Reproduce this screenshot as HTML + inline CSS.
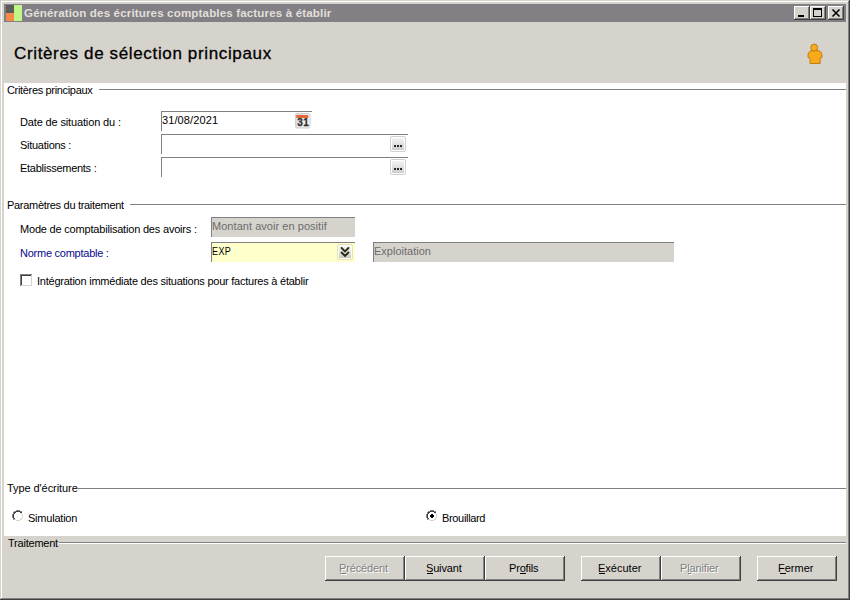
<!DOCTYPE html>
<html><head><meta charset="utf-8"><style>
html,body{margin:0;padding:0;width:850px;height:600px;overflow:hidden;background:#d6d3cd}
body{position:relative;font-family:"Liberation Sans",sans-serif}
.b{position:absolute}
.tx{position:absolute;white-space:nowrap;font-family:"Liberation Sans",sans-serif}
u{text-decoration:underline;text-underline-offset:1px}
</style></head><body>
<div class="b" style="left:0px;top:0px;width:850px;height:600px;background:#d6d3cd"></div>
<div class="b" style="left:1px;top:1px;width:848px;height:1px;background:#fff"></div>
<div class="b" style="left:1px;top:1px;width:1px;height:597px;background:#fff"></div>
<div class="b" style="left:848px;top:1px;width:1px;height:598px;background:#808080"></div>
<div class="b" style="left:1px;top:598px;width:848px;height:1px;background:#808080"></div>
<div class="b" style="left:849px;top:0px;width:1px;height:600px;background:#404040"></div>
<div class="b" style="left:0px;top:599px;width:850px;height:1px;background:#404040"></div>
<div class="b" style="left:4px;top:4px;width:842px;height:18px;background:#828085"></div>
<div class="b" style="left:6px;top:13px;width:8px;height:8px;background:#f6884a"></div>
<div class="b" style="left:6px;top:5px;width:8px;height:8px;background:#5c5c5a"></div>
<div class="b" style="left:14px;top:5px;width:8px;height:16px;background:#c0f688"></div>
<div class="b" style="left:794px;top:6px;width:16px;height:14px;background:#d6d3cd;box-shadow:inset -1px -1px #404040, inset 1px 1px #fff, inset -2px -2px #808080"></div>
<div class="b" style="left:810px;top:6px;width:16px;height:14px;background:#d6d3cd;box-shadow:inset -1px -1px #404040, inset 1px 1px #fff, inset -2px -2px #808080"></div>
<div class="b" style="left:828px;top:6px;width:16px;height:14px;background:#d6d3cd;box-shadow:inset -1px -1px #404040, inset 1px 1px #fff, inset -2px -2px #808080"></div>
<div class="b" style="left:798px;top:15px;width:6px;height:2px;background:#000"></div>
<div class="b" style="left:813px;top:8px;width:9px;height:9px;box-sizing:border-box;border:1px solid #000;border-top-width:2px"></div>
<svg class="b" style="left:828px;top:6px" width="16" height="14"><path d="M4.5 3.5 L11.5 10.5 M11.5 3.5 L4.5 10.5" stroke="#000" stroke-width="1.6" fill="none"/></svg>
<div class="b" style="left:4px;top:83px;width:842px;height:453px;background:#fff"></div>
<div class="b" style="left:99px;top:89px;width:747px;height:1px;background:#808080"></div>
<div class="b" style="left:130px;top:204px;width:716px;height:1px;background:#808080"></div>
<div class="b" style="left:78px;top:488px;width:768px;height:1px;background:#808080"></div>
<div class="b" style="left:59px;top:542px;width:787px;height:1px;background:#808080"></div>
<div class="b" style="left:59px;top:543px;width:787px;height:1px;background:#fff"></div>
<div class="b" style="left:161px;top:111px;width:151px;height:20px;box-sizing:border-box;border-top:1px solid #808080;border-left:1px solid #808080;background:#fff"></div>
<svg class="b" style="left:294px;top:113px" width="17" height="16" viewBox="0 0 17 16">
<defs><linearGradient id="cg" x1="0" y1="0" x2="1" y2="0"><stop offset="0" stop-color="#dcdcdc"/><stop offset="1" stop-color="#f4f4f4"/></linearGradient></defs>
<rect x="1.5" y="0.5" width="14.5" height="14.5" rx="1.5" fill="url(#cg)" stroke="#d0d0d0"/>
<rect x="2.3" y="2" width="12" height="3" fill="#e4663c"/>
<text x="9.2" y="13.3" font-family="Liberation Sans" font-weight="bold" font-size="10" text-anchor="middle" fill="#2e2e2e" stroke="#2e2e2e" stroke-width="0.25" letter-spacing="0.4">31</text>
</svg>
<div class="b" style="left:161px;top:134px;width:247px;height:20px;box-sizing:border-box;border-top:1px solid #808080;border-left:1px solid #808080;background:#fff"></div>
<div class="b" style="left:390px;top:136px;width:16px;height:16px;box-sizing:border-box;border:1px solid #d0d0d0;border-radius:2px;box-shadow:inset 0 0 0 1px #fff;background:linear-gradient(#f6f6f6 0%,#e6e6e6 40%,#c8c8c8 100%)"></div>
<div class="b" style="left:394px;top:145px;width:2px;height:2px;background:#2a2a2a"></div>
<div class="b" style="left:397px;top:145px;width:2px;height:2px;background:#2a2a2a"></div>
<div class="b" style="left:400px;top:145px;width:2px;height:2px;background:#2a2a2a"></div>
<div class="b" style="left:161px;top:157px;width:247px;height:20px;box-sizing:border-box;border-top:1px solid #808080;border-left:1px solid #808080;background:#fff"></div>
<div class="b" style="left:390px;top:159px;width:16px;height:16px;box-sizing:border-box;border:1px solid #d0d0d0;border-radius:2px;box-shadow:inset 0 0 0 1px #fff;background:linear-gradient(#f6f6f6 0%,#e6e6e6 40%,#c8c8c8 100%)"></div>
<div class="b" style="left:394px;top:168px;width:2px;height:2px;background:#2a2a2a"></div>
<div class="b" style="left:397px;top:168px;width:2px;height:2px;background:#2a2a2a"></div>
<div class="b" style="left:400px;top:168px;width:2px;height:2px;background:#2a2a2a"></div>
<div class="b" style="left:211px;top:217px;width:144px;height:20px;box-sizing:border-box;border-top:1px solid #808080;border-left:1px solid #808080;background:#d6d3cd"></div>
<div class="b" style="left:211px;top:242px;width:144px;height:20px;box-sizing:border-box;border-top:1px solid #808080;border-left:1px solid #808080;background:#ffffcc"></div>
<div class="b" style="left:337px;top:244px;width:16px;height:16px;box-sizing:border-box;border:1px solid #e4e2bc;border-radius:2px;box-shadow:inset 0 0 0 1px #fdfdf4;background:linear-gradient(#f8f8ec 0%,#ecebdc 45%,#c4c2b2 100%)"></div>
<svg class="b" style="left:337px;top:244px" width="16" height="16"><path d="M4.6 4 L8 7.5 L11.4 4 M4.6 8.5 L8 12 L11.4 8.5" stroke="#2a2a1e" stroke-width="1.9" fill="none" stroke-linecap="round"/></svg>
<div class="b" style="left:373px;top:242px;width:301px;height:20px;box-sizing:border-box;border-top:1px solid #808080;border-left:1px solid #808080;background:#d6d3cd"></div>
<div class="b" style="left:20px;top:274px;width:12px;height:1px;background:#808080"></div>
<div class="b" style="left:20px;top:274px;width:1px;height:12px;background:#808080"></div>
<div class="b" style="left:21px;top:275px;width:10px;height:1px;background:#404040"></div>
<div class="b" style="left:21px;top:275px;width:1px;height:10px;background:#404040"></div>
<div class="b" style="left:21px;top:285px;width:11px;height:1px;background:#d6d3cd"></div>
<div class="b" style="left:31px;top:275px;width:1px;height:11px;background:#d6d3cd"></div>
<svg class="b" style="left:12px;top:510px" width="12" height="12" shape-rendering="crispEdges"><rect x="4" y="0" width="1" height="1" fill="#808080"/><rect x="5" y="0" width="1" height="1" fill="#808080"/><rect x="6" y="0" width="1" height="1" fill="#808080"/><rect x="7" y="0" width="1" height="1" fill="#808080"/><rect x="2" y="1" width="1" height="1" fill="#808080"/><rect x="3" y="1" width="1" height="1" fill="#808080"/><rect x="4" y="1" width="1" height="1" fill="#404040"/><rect x="5" y="1" width="1" height="1" fill="#404040"/><rect x="6" y="1" width="1" height="1" fill="#404040"/><rect x="7" y="1" width="1" height="1" fill="#404040"/><rect x="8" y="1" width="1" height="1" fill="#808080"/><rect x="9" y="1" width="1" height="1" fill="#808080"/><rect x="1" y="2" width="1" height="1" fill="#808080"/><rect x="2" y="2" width="1" height="1" fill="#404040"/><rect x="3" y="2" width="1" height="1" fill="#404040"/><rect x="8" y="2" width="1" height="1" fill="#404040"/><rect x="9" y="2" width="1" height="1" fill="#404040"/><rect x="10" y="2" width="1" height="1" fill="#ffffff"/><rect x="1" y="3" width="1" height="1" fill="#808080"/><rect x="2" y="3" width="1" height="1" fill="#404040"/><rect x="9" y="3" width="1" height="1" fill="#d6d3cd"/><rect x="10" y="3" width="1" height="1" fill="#ffffff"/><rect x="0" y="4" width="1" height="1" fill="#808080"/><rect x="1" y="4" width="1" height="1" fill="#404040"/><rect x="10" y="4" width="1" height="1" fill="#d6d3cd"/><rect x="11" y="4" width="1" height="1" fill="#ffffff"/><rect x="0" y="5" width="1" height="1" fill="#808080"/><rect x="1" y="5" width="1" height="1" fill="#404040"/><rect x="10" y="5" width="1" height="1" fill="#d6d3cd"/><rect x="11" y="5" width="1" height="1" fill="#ffffff"/><rect x="0" y="6" width="1" height="1" fill="#808080"/><rect x="1" y="6" width="1" height="1" fill="#404040"/><rect x="10" y="6" width="1" height="1" fill="#d6d3cd"/><rect x="11" y="6" width="1" height="1" fill="#ffffff"/><rect x="0" y="7" width="1" height="1" fill="#808080"/><rect x="1" y="7" width="1" height="1" fill="#404040"/><rect x="10" y="7" width="1" height="1" fill="#d6d3cd"/><rect x="11" y="7" width="1" height="1" fill="#ffffff"/><rect x="1" y="8" width="1" height="1" fill="#808080"/><rect x="2" y="8" width="1" height="1" fill="#404040"/><rect x="9" y="8" width="1" height="1" fill="#d6d3cd"/><rect x="10" y="8" width="1" height="1" fill="#ffffff"/><rect x="1" y="9" width="1" height="1" fill="#808080"/><rect x="2" y="9" width="1" height="1" fill="#d6d3cd"/><rect x="3" y="9" width="1" height="1" fill="#d6d3cd"/><rect x="8" y="9" width="1" height="1" fill="#d6d3cd"/><rect x="9" y="9" width="1" height="1" fill="#d6d3cd"/><rect x="10" y="9" width="1" height="1" fill="#ffffff"/><rect x="2" y="10" width="1" height="1" fill="#ffffff"/><rect x="3" y="10" width="1" height="1" fill="#ffffff"/><rect x="4" y="10" width="1" height="1" fill="#d6d3cd"/><rect x="5" y="10" width="1" height="1" fill="#d6d3cd"/><rect x="6" y="10" width="1" height="1" fill="#d6d3cd"/><rect x="7" y="10" width="1" height="1" fill="#d6d3cd"/><rect x="8" y="10" width="1" height="1" fill="#ffffff"/><rect x="9" y="10" width="1" height="1" fill="#ffffff"/><rect x="4" y="11" width="1" height="1" fill="#ffffff"/><rect x="5" y="11" width="1" height="1" fill="#ffffff"/><rect x="6" y="11" width="1" height="1" fill="#ffffff"/><rect x="7" y="11" width="1" height="1" fill="#ffffff"/></svg>
<svg class="b" style="left:426px;top:510px" width="12" height="12" shape-rendering="crispEdges"><rect x="4" y="0" width="1" height="1" fill="#808080"/><rect x="5" y="0" width="1" height="1" fill="#808080"/><rect x="6" y="0" width="1" height="1" fill="#808080"/><rect x="7" y="0" width="1" height="1" fill="#808080"/><rect x="2" y="1" width="1" height="1" fill="#808080"/><rect x="3" y="1" width="1" height="1" fill="#808080"/><rect x="4" y="1" width="1" height="1" fill="#404040"/><rect x="5" y="1" width="1" height="1" fill="#404040"/><rect x="6" y="1" width="1" height="1" fill="#404040"/><rect x="7" y="1" width="1" height="1" fill="#404040"/><rect x="8" y="1" width="1" height="1" fill="#808080"/><rect x="9" y="1" width="1" height="1" fill="#808080"/><rect x="1" y="2" width="1" height="1" fill="#808080"/><rect x="2" y="2" width="1" height="1" fill="#404040"/><rect x="3" y="2" width="1" height="1" fill="#404040"/><rect x="8" y="2" width="1" height="1" fill="#404040"/><rect x="9" y="2" width="1" height="1" fill="#404040"/><rect x="10" y="2" width="1" height="1" fill="#ffffff"/><rect x="1" y="3" width="1" height="1" fill="#808080"/><rect x="2" y="3" width="1" height="1" fill="#404040"/><rect x="9" y="3" width="1" height="1" fill="#d6d3cd"/><rect x="10" y="3" width="1" height="1" fill="#ffffff"/><rect x="0" y="4" width="1" height="1" fill="#808080"/><rect x="1" y="4" width="1" height="1" fill="#404040"/><rect x="5" y="4" width="1" height="1" fill="#000"/><rect x="6" y="4" width="1" height="1" fill="#000"/><rect x="10" y="4" width="1" height="1" fill="#d6d3cd"/><rect x="11" y="4" width="1" height="1" fill="#ffffff"/><rect x="0" y="5" width="1" height="1" fill="#808080"/><rect x="1" y="5" width="1" height="1" fill="#404040"/><rect x="4" y="5" width="1" height="1" fill="#000"/><rect x="5" y="5" width="1" height="1" fill="#000"/><rect x="6" y="5" width="1" height="1" fill="#000"/><rect x="7" y="5" width="1" height="1" fill="#000"/><rect x="10" y="5" width="1" height="1" fill="#d6d3cd"/><rect x="11" y="5" width="1" height="1" fill="#ffffff"/><rect x="0" y="6" width="1" height="1" fill="#808080"/><rect x="1" y="6" width="1" height="1" fill="#404040"/><rect x="4" y="6" width="1" height="1" fill="#000"/><rect x="5" y="6" width="1" height="1" fill="#000"/><rect x="6" y="6" width="1" height="1" fill="#000"/><rect x="7" y="6" width="1" height="1" fill="#000"/><rect x="10" y="6" width="1" height="1" fill="#d6d3cd"/><rect x="11" y="6" width="1" height="1" fill="#ffffff"/><rect x="0" y="7" width="1" height="1" fill="#808080"/><rect x="1" y="7" width="1" height="1" fill="#404040"/><rect x="5" y="7" width="1" height="1" fill="#000"/><rect x="6" y="7" width="1" height="1" fill="#000"/><rect x="10" y="7" width="1" height="1" fill="#d6d3cd"/><rect x="11" y="7" width="1" height="1" fill="#ffffff"/><rect x="1" y="8" width="1" height="1" fill="#808080"/><rect x="2" y="8" width="1" height="1" fill="#404040"/><rect x="9" y="8" width="1" height="1" fill="#d6d3cd"/><rect x="10" y="8" width="1" height="1" fill="#ffffff"/><rect x="1" y="9" width="1" height="1" fill="#808080"/><rect x="2" y="9" width="1" height="1" fill="#d6d3cd"/><rect x="3" y="9" width="1" height="1" fill="#d6d3cd"/><rect x="8" y="9" width="1" height="1" fill="#d6d3cd"/><rect x="9" y="9" width="1" height="1" fill="#d6d3cd"/><rect x="10" y="9" width="1" height="1" fill="#ffffff"/><rect x="2" y="10" width="1" height="1" fill="#ffffff"/><rect x="3" y="10" width="1" height="1" fill="#ffffff"/><rect x="4" y="10" width="1" height="1" fill="#d6d3cd"/><rect x="5" y="10" width="1" height="1" fill="#d6d3cd"/><rect x="6" y="10" width="1" height="1" fill="#d6d3cd"/><rect x="7" y="10" width="1" height="1" fill="#d6d3cd"/><rect x="8" y="10" width="1" height="1" fill="#ffffff"/><rect x="9" y="10" width="1" height="1" fill="#ffffff"/><rect x="4" y="11" width="1" height="1" fill="#ffffff"/><rect x="5" y="11" width="1" height="1" fill="#ffffff"/><rect x="6" y="11" width="1" height="1" fill="#ffffff"/><rect x="7" y="11" width="1" height="1" fill="#ffffff"/></svg>
<svg class="b" style="left:806px;top:42px" width="18" height="24" viewBox="0 0 18 24">
<path d="M4 9.2 Q9 7.4 14 9.2 Q15.9 10.2 16 13 L16 15.5 L14.2 16.2 L14.2 21.5 L4 21.5 L4 16.2 L2 15.5 L2 13 Q2.1 10.2 4 9.2 Z" fill="#f8aa1c" stroke="#b8780c" stroke-width="0.9"/>
<circle cx="8.2" cy="5.6" r="3.5" fill="#f8aa1c" stroke="#b8780c" stroke-width="0.9"/>
</svg>
<div class="b" style="left:325px;top:556px;width:80px;height:25px;background:#d6d3cd;box-shadow:inset -1px -1px #404040, inset 1px 1px #fff, inset -2px -2px #808080"></div>
<div class="b" style="left:405px;top:556px;width:80px;height:25px;background:#d6d3cd;box-shadow:inset -1px -1px #404040, inset 1px 1px #fff, inset -2px -2px #808080"></div>
<div class="b" style="left:485px;top:556px;width:80px;height:25px;background:#d6d3cd;box-shadow:inset -1px -1px #404040, inset 1px 1px #fff, inset -2px -2px #808080"></div>
<div class="b" style="left:581px;top:556px;width:80px;height:25px;background:#d6d3cd;box-shadow:inset -1px -1px #404040, inset 1px 1px #fff, inset -2px -2px #808080"></div>
<div class="b" style="left:661px;top:556px;width:80px;height:25px;background:#d6d3cd;box-shadow:inset -1px -1px #404040, inset 1px 1px #fff, inset -2px -2px #808080"></div>
<div class="b" style="left:757px;top:556px;width:80px;height:25px;background:#d6d3cd;box-shadow:inset -1px -1px #404040, inset 1px 1px #fff, inset -2px -2px #808080"></div>
<div class="tx" style="left:24.0px;top:7px;font-size:11.6px;line-height:11.6px;font-weight:bold;color:#e2dfda;letter-spacing:0.132px;">Génération des écritures comptables factures à établir</div>
<div class="tx" style="left:14.0px;top:45px;font-size:17px;line-height:17px;font-weight:normal;color:#000;letter-spacing:0.645px;-webkit-text-stroke:0.3px #000;">Critères de sélection principaux</div>
<div class="tx" style="left:7.0px;top:85px;font-size:11px;line-height:11px;font-weight:normal;color:#000;letter-spacing:-0.333px;">Critères principaux</div>
<div class="tx" style="left:20.0px;top:117px;font-size:11px;line-height:11px;font-weight:normal;color:#000;letter-spacing:-0.143px;">Date de situation du :</div>
<div class="tx" style="left:20.0px;top:140px;font-size:11px;line-height:11px;font-weight:normal;color:#000;letter-spacing:-0.273px;">Situations :</div>
<div class="tx" style="left:20.0px;top:163px;font-size:11px;line-height:11px;font-weight:normal;color:#000;letter-spacing:-0.267px;">Etablissements :</div>
<div class="tx" style="left:7.0px;top:200px;font-size:11px;line-height:11px;font-weight:normal;color:#000;letter-spacing:-0.304px;">Paramètres du traitement</div>
<div class="tx" style="left:20.0px;top:224px;font-size:11px;line-height:11px;font-weight:normal;color:#000;letter-spacing:-0.194px;">Mode de comptabilisation des avoirs :</div>
<div class="tx" style="left:20.0px;top:248px;font-size:11px;line-height:11px;font-weight:normal;color:#0a0a8c;letter-spacing:-0.25px;">Norme comptable :</div>
<div class="tx" style="left:37.0px;top:276px;font-size:11px;line-height:11px;font-weight:normal;color:#000;letter-spacing:-0.237px;">Intégration immédiate des situations pour factures à établir</div>
<div class="tx" style="left:7.0px;top:483px;font-size:11px;line-height:11px;font-weight:normal;color:#000;letter-spacing:-0.071px;">Type d'écriture</div>
<div class="tx" style="left:28.0px;top:513px;font-size:11px;line-height:11px;font-weight:normal;color:#000;letter-spacing:-0.222px;">Simulation</div>
<div class="tx" style="left:442.0px;top:513px;font-size:11px;line-height:11px;font-weight:normal;color:#000;letter-spacing:-0.333px;">Brouillard</div>
<div class="tx" style="left:8.0px;top:538px;font-size:11px;line-height:11px;font-weight:normal;color:#000;letter-spacing:-0.222px;">Traitement</div>
<div class="tx" style="left:162.0px;top:115px;font-size:11px;line-height:11px;font-weight:normal;color:#000;letter-spacing:0.111px;">31/08/2021</div>
<div class="tx" style="left:212.0px;top:221px;font-size:11px;line-height:11px;font-weight:normal;color:#6c6c6c;letter-spacing:0.043px;">Montant avoir en positif</div>
<div class="tx" style="left:212.0px;top:246px;font-size:11px;line-height:11px;font-weight:normal;color:#000;letter-spacing:0.5px;transform:scaleX(0.82);transform-origin:0 0;">EXP</div>
<div class="tx" style="left:374.0px;top:246px;font-size:11px;line-height:11px;font-weight:normal;color:#6c6c6c;letter-spacing:0.0px;">Exploitation</div>
<div class="tx" style="left:339.0px;top:563px;font-size:11px;line-height:11px;font-weight:normal;color:#808080;letter-spacing:-0.125px;text-shadow:1px 1px 0 #fff;">Précédent</div>
<div class="tx" style="left:426.0px;top:563px;font-size:11px;line-height:11px;font-weight:normal;color:#000;letter-spacing:-0.167px;">Suivant</div>
<div class="tx" style="left:509.0px;top:563px;font-size:11px;line-height:11px;font-weight:normal;color:#000;letter-spacing:-0.167px;">Profils</div>
<div class="tx" style="left:598.0px;top:563px;font-size:11px;line-height:11px;font-weight:normal;color:#000;letter-spacing:0.0px;">Exécuter</div>
<div class="tx" style="left:680.0px;top:563px;font-size:11px;line-height:11px;font-weight:normal;color:#808080;letter-spacing:-0.125px;text-shadow:1px 1px 0 #fff;">Planifier</div>
<div class="tx" style="left:778.0px;top:563px;font-size:11px;line-height:11px;font-weight:normal;color:#000;letter-spacing:0.0px;">Fermer</div>
<div class="b" style="left:341px;top:574px;width:6px;height:1px;background:#fff"></div>
<div class="b" style="left:340px;top:573px;width:6px;height:1px;background:#808080"></div>
<div class="b" style="left:427px;top:573px;width:6px;height:1px;background:#000"></div>
<div class="b" style="left:520px;top:573px;width:6px;height:1px;background:#000"></div>
<div class="b" style="left:599px;top:573px;width:6px;height:1px;background:#000"></div>
<div class="b" style="left:689px;top:574px;width:3px;height:1px;background:#fff"></div>
<div class="b" style="left:688px;top:573px;width:3px;height:1px;background:#808080"></div>
<div class="b" style="left:780px;top:573px;width:6px;height:1px;background:#000"></div>
</body></html>
